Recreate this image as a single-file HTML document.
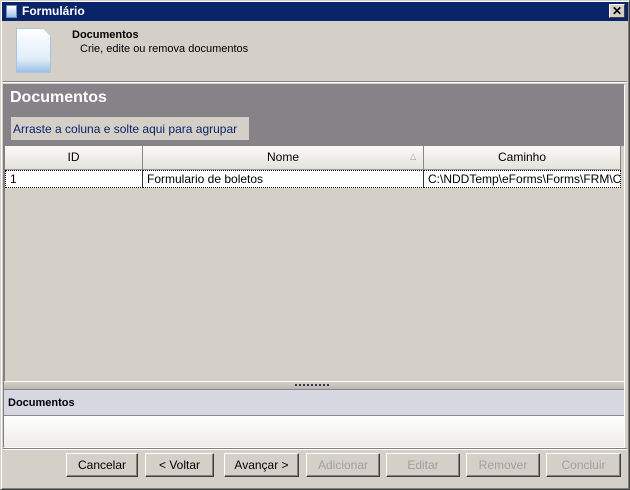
<html><head><style>
body{margin:0;width:630px;height:490px;overflow:hidden;background:#d4d0c8;font-family:"Liberation Sans",sans-serif;font-size:11px;position:relative}
div{position:absolute;box-sizing:border-box}
.btn{top:453px;height:24px;border:1px solid;border-color:#fff #404040 #404040 #fff;box-shadow:inset -1px -1px #808080;text-align:center;line-height:22px;font-size:12px;color:#000}
.dis{color:#a0a0a0}
.hd{top:146px;height:24px;background:linear-gradient(#fafaf8,#e4e2dc);border-right:1px solid #888;border-bottom:1px solid #999;text-align:center;line-height:23px;font-size:12px}
.cell{top:170px;height:18px;line-height:17px;font-size:12px;padding-left:4px;background:#fff;white-space:nowrap;overflow:hidden}
</style></head><body>
<div style="left:0;top:0;width:630px;height:490px;border:1px solid;border-color:#d4d0c8 #404040 #404040 #d4d0c8;box-shadow:inset 1px 1px #fff,inset -1px -1px #808080"></div>
<div style="left:2px;top:2px;width:626px;height:19px;background:#0a246a;color:#fff;font-weight:bold;font-size:12px;line-height:19px;padding-left:20px">Formulário</div>
<div style="left:6px;top:5px;width:11px;height:13px;background:linear-gradient(#fff,#9cc0e8);border:1px solid #6a8ab8"></div>
<div style="left:609px;top:4px;width:16px;height:14px;background:#d4d0c8;border:1px solid;border-color:#fff #404040 #404040 #fff;text-align:center;line-height:12px;font-weight:bold;font-size:12px">✕</div>
<div style="left:16px;top:28px;width:35px;height:45px;background:linear-gradient(#fff,#e0ecf8 70%,#9cc0e8);border:1px solid #a8c4e0;clip-path:polygon(0 0,75% 0,100% 20%,100% 100%,0 100%)"></div>
<div style="left:72px;top:29px;font-weight:bold;font-size:11px">Documentos</div>
<div style="left:80px;top:43px;font-size:11px">Crie, edite ou remova documentos</div>
<div style="left:3px;top:81px;width:624px;height:2px;border-top:1px solid #808080;border-bottom:1px solid #fff"></div>
<div style="left:3px;top:84px;width:622px;height:364px;border:1px solid;border-color:#808080 #fff #fff #808080;background:#d4d0c8"></div>
<div style="left:4px;top:84px;width:620px;height:62px;background:#858387"></div>
<div style="left:10px;top:89px;color:#fff;font-weight:bold;font-size:16px">Documentos</div>
<div style="left:11px;top:117px;width:238px;height:23px;background:#d4d0c8;color:#0a246a;font-size:12px;line-height:25px;padding-left:2px">Arraste a coluna e solte aqui para agrupar</div>
<div style="left:4px;top:146px;width:1px;height:236px;background:#808080"></div>
<div class="hd" style="left:5px;width:138px">ID</div>
<div class="hd" style="left:143px;width:281px">Nome</div>
<div style="left:410px;top:152px;font-size:8px;color:#999">△</div>
<div class="hd" style="left:424px;width:197px">Caminho</div>
<div class="cell" style="left:5px;width:138px;border:1px dotted #000;border-right:1px solid #333">1</div>
<div class="cell" style="left:143px;width:281px;border-top:1px dotted #000;border-bottom:1px dotted #000;border-right:1px solid #333">Formulario de boletos</div>
<div class="cell" style="left:424px;width:197px;border:1px dotted #000;border-left:none">C:\NDDTemp\eForms\Forms\FRM\C</div>
<div style="left:4px;top:381px;width:620px;height:8px;background:linear-gradient(#d4d0c8,#b8b6b0);border-top:1px solid #fff"></div>
<div style="left:295px;top:384px;width:34px;height:2px;border-top:2px dotted #334"></div>
<div style="left:4px;top:389px;width:620px;height:27px;background:#d6d7e0;border-top:1px solid #888;border-bottom:1px solid #888;font-weight:bold;font-size:11px;line-height:26px;padding-left:4px">Documentos</div>
<div style="left:4px;top:416px;width:620px;height:31px;background:linear-gradient(#fff,#ecebe6)"></div>
<div style="left:3px;top:448px;width:624px;height:2px;border-top:1px solid #808080;border-bottom:1px solid #fff"></div>
<div class="btn" style="left:66px;width:72px">Cancelar</div>
<div class="btn" style="left:145px;width:69px">&lt; Voltar</div>
<div class="btn" style="left:224px;width:75px">Avançar &gt;</div>
<div class="btn dis" style="left:306px;width:74px">Adicionar</div>
<div class="btn dis" style="left:386px;width:74px">Editar</div>
<div class="btn dis" style="left:466px;width:74px">Remover</div>
<div class="btn dis" style="left:546px;width:75px">Concluir</div>
</body></html>
